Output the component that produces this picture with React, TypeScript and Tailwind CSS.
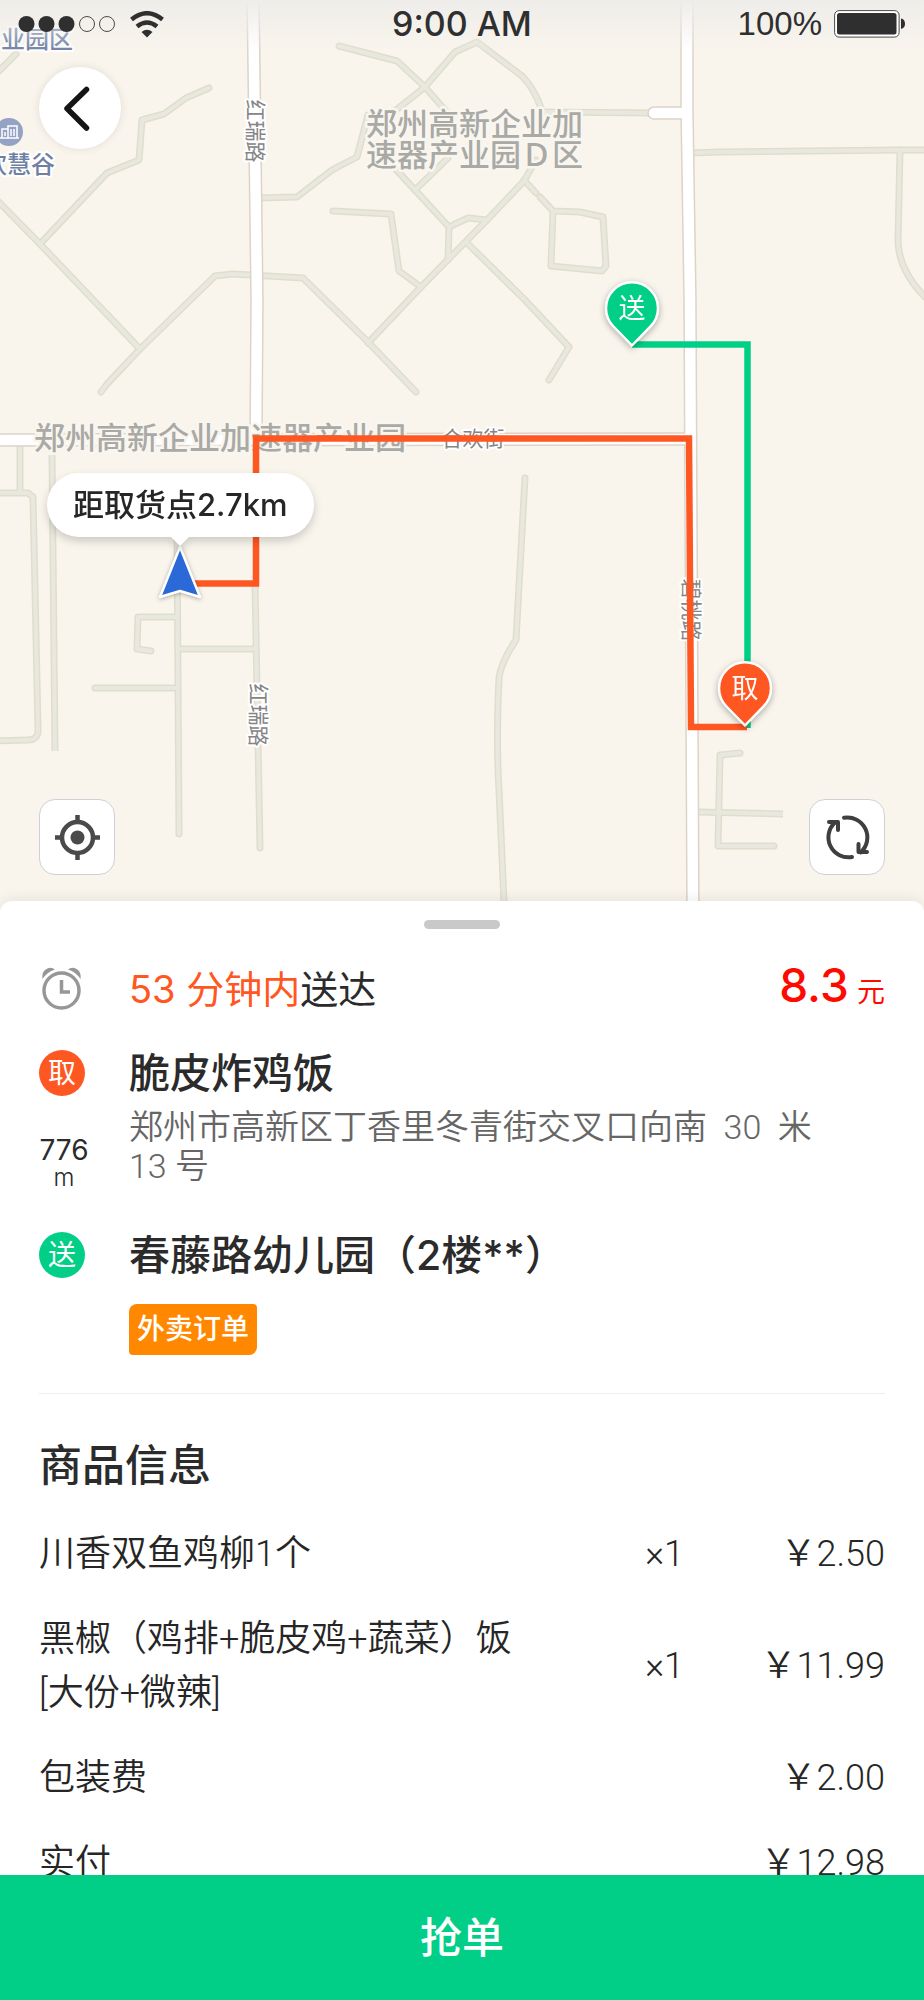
const minorRoads = [
    "M339 46 L397 61 L425 87 L452 118",
    "M396 110 L425 87 L455 52 L477 42 L522 76 Q534 88 541 108",
    "M368 115 L357 157 L332 170 L297 197 L258 198",
    "M209 88 L186 98 L164 114 L142 120 L139 160 L107 173 L40 244",
    "M-6 76 L16 54",
    "M-6 197 L40 244 L140 349",
    "M101 392 L107 384 L140 349 L215 276 L232 274 L303 278 L368 342 L416 392",
    "M368 343 L421 287 L487 220 L524 181 L536 160",
    "M333 211 L391 214 L399 271 L421 287",
    "M390 163 L415 190 L449 227 L448 260",
    "M449 227 L468 218 L487 220",
    "M415 190 L448 158",
    "M467 243 L524 299 L569 347 L549 380",
    "M524 180 L536 193",
    "M540 197 L553 211 L580 212 L603 217 L606 266 L602 271 L551 266 L553 211",
    "M545 112 L654 113",
    "M690 153 L720 152 L900 150 L930 150",
    "M900 150 L898 240 Q898 272 930 302",
    "M20 440 L20 492",
    "M-6 493 L28 493 L33 497 L38 728 Q39 740 28 740 L-6 741",
    "M177 530 L179 834",
    "M151 651 L137 649 L138 617 L177 617",
    "M95 688 L177 688",
    "M179 649 L256 649",
    "M255 583 L260 848",
    "M525 478 L516 640 Q501 662 499 678 Q496 740 499 790 L505 924",
    "M740 753 L720 755 L718 846 L774 846",
];

// roads that are cut off flat instead of with a round end
const cutRoads = ["M52 455 L55 751", "M698 812 L783 814"];

const mainRoads = [
    "M-6 440 L690 439",
    "M253 -6 L257 300 L256 440",
    "M654 113 L686 113",
    "M687 -6 L687 110 L690 300 L693 924",
];

const sansFont = "font-['Inter','Noto_Sans_CJK_SC',sans-serif]";
const lightFont = "font-['Roboto','Noto_Sans_CJK_SC',sans-serif] font-[350]";

type PinProps = {
    x: number;
    y: number;
    color: string;
    text: string;
};

function Pin({ x, y, color, text }: PinProps) {
    return (
        <g transform={`translate(${x} ${y})`} className="drop-shadow-[0_2px_3px_rgba(0,0,0,0.3)]">
            <path d="M0 37.500 L-18.500 18.500 A26 26 0 1 1 18.500 18.500 Z" fill={color} stroke="#fff" strokeWidth="2.5" strokeLinejoin="round" />
            <text textAnchor="middle" y="10" fontSize="27" fill="#fff">{text}</text>
        </g>
    );
}

function MapCanvas() {
    return (
        <svg viewBox="0 0 924 920" preserveAspectRatio="xMidYMin slice" className={`h-full w-full ${sansFont}`}>
            <g fill="none" strokeLinejoin="round">
                <g strokeLinecap="round">
                    {minorRoads.map((d) => <path key={d} d={d} stroke="#dfdecd" strokeWidth="7" />)}
                </g>
                {cutRoads.map((d) => <path key={d} d={d} stroke="#dfdecd" strokeWidth="7" />)}
                <g strokeLinecap="round">
                    {minorRoads.map((d) => <path key={d} d={d} stroke="#e9e8de" strokeWidth="4" />)}
                </g>
                {cutRoads.map((d) => <path key={d} d={d} stroke="#e9e8de" strokeWidth="4" />)}
                <g strokeLinecap="round">
                    {mainRoads.map((d) => <path key={d} d={d} stroke="#dcd3c9" strokeWidth="13.5" />)}
                    {mainRoads.map((d) => <path key={d} d={d} stroke="#fff" strokeWidth="10.5" />)}
                </g>
            </g>

            <g fontSize="31" fontWeight="500" fill="#a9a9a6" stroke="#f9f6ef" strokeWidth="5" strokeLinejoin="round" paintOrder="stroke">
                <text>
                    <tspan x="366" y="135">郑州高新企业加</tspan>
                    <tspan x="366" y="166">速器产业园Ｄ区</tspan>
                </text>
                <text x="34" y="449">郑州高新企业加速器产业园</text>
            </g>
            <g fontSize="21" fill="#858585" stroke="#fff" strokeWidth="4" strokeLinejoin="round" paintOrder="stroke" textAnchor="middle">
                <text transform="translate(248 131) rotate(90)">红瑞路</text>
                <text transform="translate(251 715) rotate(90)">红瑞路</text>
                <text transform="translate(684 610) rotate(90)">碧桃路</text>
                <text x="473" y="446">合欢街</text>
            </g>
            <g fontSize="24" fontWeight="500" fill="#6f7fa3" stroke="#fff" strokeWidth="4" strokeLinejoin="round" paintOrder="stroke" textAnchor="end">
                <text x="73" y="48">产业园区</text>
                <text x="55" y="173">欢慧谷</text>
            </g>
            <circle cx="9" cy="132" r="14" fill="#94a3c4" />
            <g fill="none" stroke="#fff" strokeWidth="1.5">
                <path d="M2 138 V129 H8 M8 138 V126 H17 V138 M0 138 H19 M11 129 V136 M14 129 V136 M5 132 V136" />
            </g>

            <g fill="none" strokeWidth="6.5">
                <path d="M632 344.500 H747.500 V728" stroke="#02cf87" />
                <path d="M186 583.500 H256 V438.500 H689 L691 727 H747" stroke="#ff5722" />
            </g>
            <Pin x={632} y={308} color="#02cf87" text="送" />
            <Pin x={745} y={688} color="#ff5722" text="取" />
            <path d="M180 547 L200 597 L180 591 L160 597 Z" fill="#2b69d6" stroke="#fff" strokeWidth="2.5" strokeLinejoin="round" className="drop-shadow-[0_1px_2px_rgba(0,0,0,0.3)]" />
        </svg>
    );
}

function StatusBar() {
    return (
        <header className="absolute inset-x-0 top-0 grid grid-cols-3 items-center bg-linear-to-b from-[#efedea] to-transparent px-[18px] pt-1 pb-2 text-[#2f2f2f]">
            <div className="flex items-center gap-[14px]">
                <svg viewBox="0 0 98 18" className="h-[18px] w-[98px]">
                    <g fill="#2f2f2f">
                        <circle cx="8.500" cy="9" r="8" />
                        <circle cx="28.500" cy="9" r="8" />
                        <circle cx="48.500" cy="9" r="8" />
                    </g>
                    <g fill="none" stroke="#4a4a4a">
                        <circle cx="69" cy="9" r="7.500" />
                        <circle cx="89" cy="9" r="7.500" />
                    </g>
                </svg>
                <svg viewBox="0 0 34 27" className="h-[27px] w-[34px]">
                    <g fill="none" stroke="#2f2f2f" strokeWidth="4.500">
                        <path d="M1.500 8.500 Q17 -4 32.500 8.500" />
                        <path d="M7 15.500 Q17 7.500 27 15.500" />
                    </g>
                    <path d="M11.500 21 Q17 16.500 22.500 21 L17 26.500 Z" fill="#2f2f2f" />
                </svg>
            </div>
            <p className="text-center text-[34px] leading-10 font-medium">9:00 AM</p>
            <div className="flex items-center justify-end gap-3">
                <p className="font-['Liberation_Sans',sans-serif] text-[33px] leading-10">100%</p>
                <svg viewBox="0 0 72 28" className="h-7 w-[72px]">
                    <rect x="0.600" y="0.600" width="64.500" height="26.500" rx="4.500" fill="#fff" stroke="#4a4a4a" />
                    <rect x="3" y="3" width="59.500" height="21.500" rx="2.500" fill="#2f2f2f" />
                    <path d="M67 8.500 Q71 9 71 14 Q71 18 67 19 Z" fill="#2f2f2f" />
                </svg>
            </div>
        </header>
    );
}

function MapView() {
    return (
        <section className="relative h-[46vh] shrink-0 overflow-hidden bg-[#f9f5ed]">
            <MapCanvas />
            <StatusBar />
            <button aria-label="返回" className="absolute top-[67px] left-[39px] flex size-[82px] items-center justify-center rounded-full bg-white shadow-[0_0_8px_rgba(0,0,0,0.1)]">
                <svg viewBox="0 0 82 82" className="size-full">
                    <path d="M47.500 22.500 L28 41.500 L47.500 61" fill="none" stroke="#151515" strokeWidth="5.500" strokeLinecap="round" strokeLinejoin="round" />
                </svg>
            </button>
            <div className="absolute top-[473px] left-[47px] rounded-full bg-white px-[26px] text-[31px] leading-16 font-medium text-[#262626] drop-shadow-[0_4px_4px_rgba(0,0,0,0.18)]">
                距取货点2.7km
                <svg viewBox="0 0 18 10" className="absolute top-full left-[124px] h-[10px] w-[18px]">
                    <path d="M0 0 H18 L9 9 Z" fill="#fff" />
                </svg>
            </div>
            <button aria-label="定位" className="absolute bottom-[45px] left-[39px] size-[76px] rounded-2xl border border-[#d0d0d4] bg-white">
                <svg viewBox="0 0 74 74" className="size-full" fill="none" stroke="#4a4a4a" strokeWidth="4.500">
                    <circle cx="37.500" cy="37.500" r="15.500" />
                    <circle cx="37.500" cy="37.500" r="7" fill="#4a4a4a" stroke="none" />
                    <path d="M37.500 15 V22 M37.500 53 V60 M15 37.500 H22 M53 37.500 H60" />
                </svg>
            </button>
            <button aria-label="刷新" className="absolute right-[39px] bottom-[45px] size-[76px] rounded-2xl border border-[#d0d0d4] bg-white">
                <svg viewBox="0 0 74 74" className="size-full" fill="none" stroke="#3f3f3f" strokeWidth="4" strokeLinecap="round" strokeLinejoin="round">
                    <path d="M34 17.700 A20 20 0 0 1 50.500 52.500" />
                    <path d="M42 57 A20 20 0 0 1 25 22.500" />
                    <path d="M19 22 H28 V30" />
                    <path d="M57 52 H48.500 V44" />
                </svg>
            </button>
        </section>
    );
}

function AlarmIcon() {
    return (
        <svg viewBox="0 0 40 43" className="h-[43px] w-10" fill="#979795">
            <circle cx="19.500" cy="23.500" r="17.500" fill="none" stroke="#979795" strokeWidth="3.500" />
            <path d="M19.500 13 V25 H28" fill="none" stroke="#979795" strokeWidth="3.500" />
            <path d="M0.500 12 Q-0.500 4.500 4.500 2 Q9 -0.500 13 2.500 Q5 5 0.500 12 Z" />
            <path d="M38.500 12 Q39.500 4.500 34.500 2 Q30 -0.500 26 2.500 Q34 5 38.500 12 Z" />
        </svg>
    );
}

const goods = [
    { name: "川香双鱼鸡柳1个", count: "×1", price: "￥2.50" },
    { name: "黑椒（鸡排+脆皮鸡+蔬菜）饭 [大份+微辣]", count: "×1", price: "￥11.99" },
    { name: "包装费", count: "", price: "￥2.00" },
    { name: "实付", count: "", price: "￥12.98" },
];

function OrderSheet() {
    return (
        <section className="relative -mt-[19px] min-h-0 flex-1 overflow-y-auto rounded-t-xl bg-white px-[39px] text-[#2b2b2b] shadow-[0_-4px_12px_rgba(0,0,0,0.06)] [scrollbar-width:none]">
            <div className="mx-auto mt-[19px] h-[9px] w-[76px] rounded-full bg-[#c9c9c9]" />

            <div className="mt-7 flex items-center">
                <div className="w-[90px] shrink-0 pl-[3px]"><AlarmIcon /></div>
                <p className="flex-1 text-[38px] leading-14"><span className="text-[#ff5722]">53 分钟内</span>送达</p>
                <p className="text-[46px] leading-14 font-medium text-[#ff0a00]">8.3 <span className="-ml-1 text-[28px] font-normal">元</span></p>
            </div>

            <div className="mt-[30px] flex">
                <div className="w-[90px] shrink-0">
                    <p className="flex size-[46px] items-center justify-center rounded-full bg-[#ff5722] text-[28px] text-white">取</p>
                    <div className="mt-9 w-[50px] text-center">
                        <p className="text-[28px] leading-9">776</p>
                        <p className="text-2xl leading-5 font-[350]">m</p>
                    </div>
                </div>
                <div>
                    <h1 className="text-[41px] leading-[46px] font-medium">脆皮炸鸡饭</h1>
                    <p className={`mt-3 text-[34px] leading-[39px] text-[#666] ${lightFont}`}>
                        郑州市高新区丁香里冬青街交叉口向南&nbsp; 30 &nbsp;米<br />13 号
                    </p>
                </div>
            </div>

            <div className="mt-11 flex">
                <div className="w-[90px] shrink-0">
                    <p className="flex size-[46px] items-center justify-center rounded-full bg-[#02cf87] text-[28px] text-white">送</p>
                </div>
                <div>
                    <h1 className="text-[41px] leading-[46px] font-medium">春藤路幼儿园（2楼**）</h1>
                    <span className="mt-[26px] inline-block rounded-sm rounded-tl-lg rounded-br-lg bg-[#ff8800] px-2 text-[28px] leading-[51px] font-medium text-white">外卖订单</span>
                </div>
            </div>

            <hr className="mt-[38px] border-[#eee]" />

            <h2 className="mt-10 text-[43px] leading-[62px] font-medium">商品信息</h2>
            <table className={`w-full text-4xl leading-[54px] text-[#262626] ${lightFont}`}>
                <tbody>
                    {goods.map((item) => (
                        <tr key={item.name}>
                            <td className="w-[520px] pt-[31px]">{item.name}</td>
                            <td className="pt-[31px] text-right">{item.count}</td>
                            <td className="w-[201px] pt-[31px] text-right">{item.price}</td>
                        </tr>
                    ))}
                </tbody>
            </table>
        </section>
    );
}

export default function App() {
    return (
        <main className={`flex h-screen flex-col overflow-hidden bg-white ${sansFont}`}>
            <MapView />
            <OrderSheet />
            <button className="h-[125px] shrink-0 bg-[#02cf87] text-[42px] font-medium text-white">抢单</button>
        </main>
    );
}
